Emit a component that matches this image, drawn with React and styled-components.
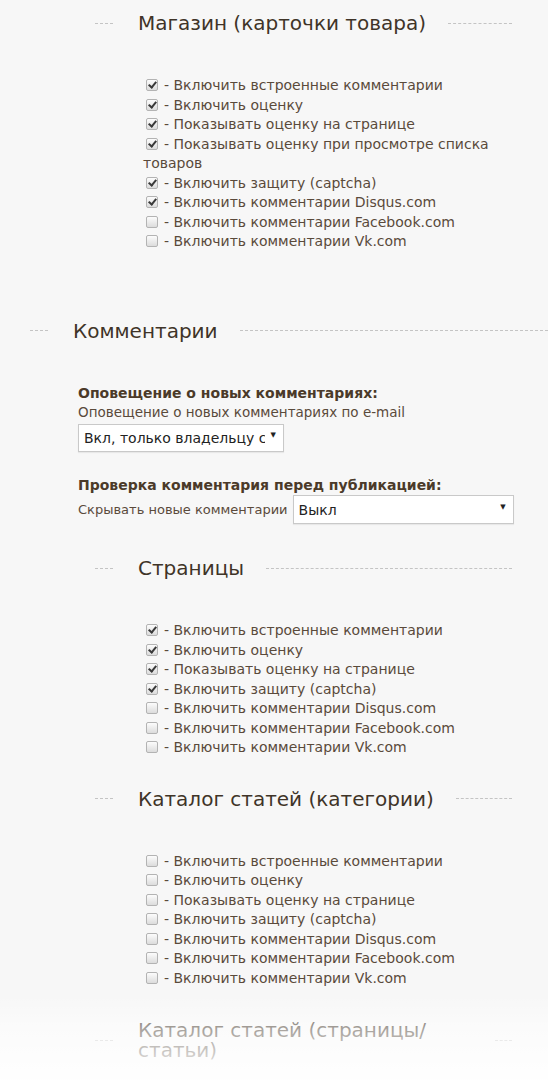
import React from "react";
import styled, { createGlobalStyle } from "styled-components";

const GlobalStyle = createGlobalStyle`
  html, body {
    margin: 0;
    padding: 0;
    background: #f7f7f7;
  }
  body {
    font-family: "DejaVu Sans", Verdana, sans-serif;
    font-size: 14px;
    color: #5a4a3b;
    overflow: hidden;
  }
`;

const Page = styled.div`
  position: relative;
  width: 548px;
  height: 1080px;
  overflow: hidden;
  padding-top: 13px;
  box-sizing: border-box;
`;

const Section = styled.section`
  margin-left: ${p => p.$left}px;
  width: ${p => p.$width}px;
  margin-bottom: ${p => p.$bottom}px;
`;

const HeadRow = styled.div`
  display: flex;
  align-items: center;
`;

const Dash = styled.span`
  flex: ${p => (p.$grow ? "1 1 auto" : "0 0 18px")};
  min-width: 17px;
  height: 0;
  border-top: 1px dashed #c4c4c4;
`;

const Title = styled.h2`
  flex: 0 1 auto;
  min-width: 0;
  margin: 0 22px 0 25px;
  font-size: 20px;
  line-height: 20px;
  font-weight: normal;
  color: #3f3428;
`;

const Body = styled.div`
  margin-top: 43px;
  padding-left: 48px;
  line-height: 19.5px;
  font-size: ${p => p.$size || 14}px;
`;

const Row = styled.label`
  display: block;
`;

const Box = styled.input.attrs({ type: "checkbox" })`
  appearance: none;
  position: relative;
  width: 12px;
  height: 12px;
  margin: 0 6px 0 3px;
  vertical-align: -1px;
  border: 1px solid #b3b3b3;
  border-radius: 2px;
  background: linear-gradient(#fcfcfc, #dcdcdc);
  box-sizing: border-box;

  &:checked::after {
    content: "";
    position: absolute;
    left: 3px;
    top: 0px;
    width: 3px;
    height: 6px;
    border: solid #3a3a3a;
    border-width: 0 2px 2px 0;
    transform: rotate(40deg);
  }
`;

const Label = styled.div`
  font-weight: bold;
  font-size: 14px;
  color: #4b3a29;
`;

const Field = styled.div`
  margin-bottom: ${p => p.$gap || 0}px;
`;

const Inline = styled.div`
  display: flex;
  align-items: center;
  gap: 5px;
  font-size: 13px;
`;

const SelectWrap = styled.div`
  position: relative;
  display: inline-block;
  width: ${p => p.$width}px;
  height: ${p => p.$height}px;
  margin-top: ${p => p.$top || 0}px;
`;

const Select = styled.select`
  appearance: none;
  width: 100%;
  height: 100%;
  padding: 0 18px 0 5px;
  border: 1px solid #c9c9c9;
  border-radius: 0;
  background: #fff;
  font-family: "DejaVu Sans", Verdana, sans-serif;
  font-size: 14px;
  color: #222;
  box-shadow: 0 1px 1px rgba(0, 0, 0, 0.06);
`;

const Arrow = styled.span`
  position: absolute;
  right: 8px;
  top: 50%;
  transform: translateY(-60%);
  font-size: 7px;
  color: #222;
  pointer-events: none;
`;

const Fade = styled.div`
  position: absolute;
  left: 0;
  right: 0;
  bottom: 0;
  height: 85px;
  background: linear-gradient(rgba(255, 255, 255, 0), rgba(255, 255, 255, 0.55) 40%, rgba(255, 255, 255, 0.95));
  pointer-events: none;
`;

const full = [
  "Включить встроенные комментарии",
  "Включить оценку",
  "Показывать оценку на странице",
];
const tail = [
  "Включить защиту (captcha)",
  "Включить комментарии Disqus.com",
  "Включить комментарии Facebook.com",
  "Включить комментарии Vk.com",
];

const shop = [
  ...full.map(t => [t, true]),
  ["Показывать оценку при просмотре списка товаров", true],
  [tail[0], true],
  [tail[1], true],
  [tail[2], false],
  [tail[3], false],
];
const pages = [...full, ...tail].map((t, i) => [t, i < 4]);
const catalog = [...full, ...tail].map(t => [t, false]);

const Heading = ({ children }) => (
  <HeadRow>
    <Dash />
    <Title>{children}</Title>
    <Dash $grow />
  </HeadRow>
);

const Checks = ({ items }) => (
  <Body>
    {items.map(([text, on], i) => (
      <Row key={i}>
        <Box defaultChecked={on} />- {text}
      </Row>
    ))}
  </Body>
);

const Dropdown = ({ value, width, height, top }) => (
  <SelectWrap $width={width} $height={height} $top={top}>
    <Select defaultValue={value}>
      <option>{value}</option>
    </Select>
    <Arrow>▼</Arrow>
  </SelectWrap>
);

export default function App() {
  return (
    <Page>
      <GlobalStyle />
      <Section $left={95} $width={417} $bottom={69}>
        <Heading>Магазин (карточки товара)</Heading>
        <Checks items={shop} />
      </Section>

      <Section $left={30} $width={518} $bottom={34}>
        <Heading>Комментарии</Heading>
        <Body $size={13.5}>
          <Field $gap={24}>
            <Label>Оповещение о новых комментариях:</Label>
            <div>Оповещение о новых комментариях по e-mail</div>
            <Dropdown value="Вкл, только владельцу сайта" width={206} height={28} top={1} />
          </Field>
          <Field>
            <Label>Проверка комментария перед публикацией:</Label>
            <Inline>
              Скрывать новые комментарии
              <Dropdown value="Выкл" width={221} height={29} />
            </Inline>
          </Field>
        </Body>
      </Section>

      <Section $left={95} $width={417} $bottom={31}>
        <Heading>Страницы</Heading>
        <Checks items={pages} />
      </Section>

      <Section $left={95} $width={417} $bottom={32}>
        <Heading>Каталог статей (категории)</Heading>
        <Checks items={catalog} />
      </Section>

      <Section $left={95} $width={417} $bottom={32}>
        <Heading>Каталог статей (страницы/ статьи)</Heading>
      </Section>
      <Fade />
    </Page>
  );
}
